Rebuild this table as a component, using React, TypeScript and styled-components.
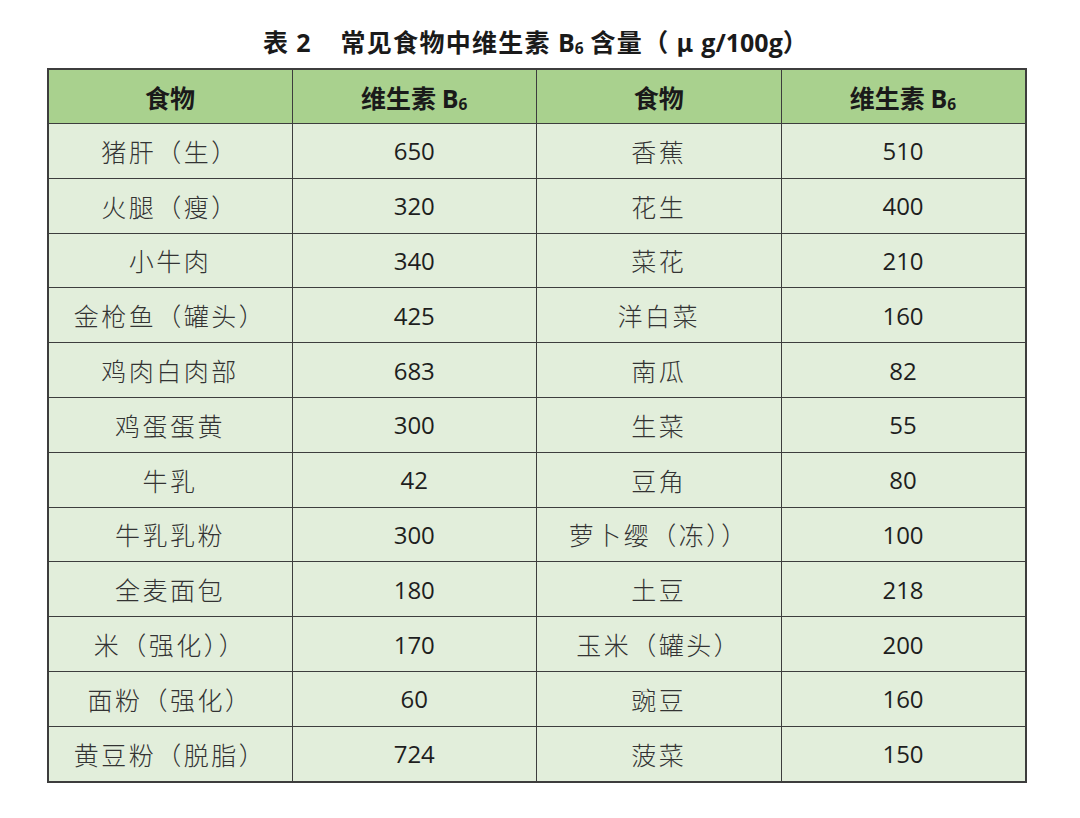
import { createGlobalStyle } from 'styled-components';
import styled from 'styled-components';

const GlobalStyle = createGlobalStyle`
  body {
    margin: 0;
    background: #ffffff;
    font-family: "Noto Sans CJK SC", "Noto Sans", sans-serif;
  }
`;

const Page = styled.div`
  width: 1080px;
  height: 818px;
  padding-top: 24px;
  box-sizing: border-box;
  display: flex;
  flex-direction: column;
  align-items: center;
`;

const Title = styled.h1`
  margin: 0 0 10px -8px;
  height: 34px;
  line-height: 34px;
  text-align: center;
  white-space: pre;
  font-size: 25px;
  font-weight: 600;
  color: #1a1a1a;
  letter-spacing: 1.3px;
`;

const Latin = styled.span`
  font-family: "Open Sans", "Noto Sans", sans-serif;
  font-weight: 700;
  letter-spacing: 0;
`;

const Gap = styled.span<{ $w: number }>`
  display: inline-block;
  width: ${({ $w }) => $w}px;
`;

const Sub = styled.sub`
  font-size: 0.62em;
  vertical-align: -0.1em;
  font-family: "Open Sans", sans-serif;
  font-weight: 700;
  letter-spacing: 0;
`;

const Table = styled.table`
  width: 980px;
  margin-left: -7px;
  border-collapse: collapse;
  border: 2px solid #3d3d3d;
  table-layout: fixed;
`;

const HeadCell = styled.th`
  height: 53px;
  background: #a9d18e;
  border: 1.5px solid #3d3d3d;
  font-size: 25px;
  font-weight: 700;
  color: #1a1a1a;
  text-align: center;
  padding: 0;
`;

const Cell = styled.td<{ $num?: boolean }>`
  height: 53.8px;
  background: #e2eedb;
  border: 1.5px solid #3d3d3d;
  text-align: center;
  padding: 0;
  color: ${({ $num }) => ($num ? '#1e1e1e' : '#333')};
  font-size: ${({ $num }) => ($num ? '24px' : '25px')};
  letter-spacing: ${({ $num }) => ($num ? '0' : '2.5px')};
  font-family: ${({ $num }) =>
    $num ? '"Open Sans", "Noto Sans", sans-serif' : '"Noto Sans CJK SC", sans-serif'};
  font-weight: ${({ $num }) => ($num ? 400 : 300)};
`;

const rows: [string, string, string, string][] = [
  ['猪肝（生）', '650', '香蕉', '510'],
  ['火腿（瘦）', '320', '花生', '400'],
  ['小牛肉', '340', '菜花', '210'],
  ['金枪鱼（罐头）', '425', '洋白菜', '160'],
  ['鸡肉白肉部', '683', '南瓜', '82'],
  ['鸡蛋蛋黄', '300', '生菜', '55'],
  ['牛乳', '42', '豆角', '80'],
  ['牛乳乳粉', '300', '萝卜缨（冻））', '100'],
  ['全麦面包', '180', '土豆', '218'],
  ['米（强化））', '170', '玉米（罐头）', '200'],
  ['面粉（强化）', '60', '豌豆', '160'],
  ['黄豆粉（脱脂）', '724', '菠菜', '150'],
];

const VitaminHead = () => (
  <>
    维生素 <Latin>B</Latin>
    <Sub>6</Sub>
  </>
);

export default function App() {
  return (
    <>
      <GlobalStyle />
      <Page>
        <Title>
          {'表 '}
          <Latin>2</Latin>
          <Gap $w={30} />
          {'常见食物中维生素 '}
          <Latin>B</Latin>
          <Sub>6</Sub>
          {' 含量（ μ '}
          <Latin>g/100g</Latin>
          {'）'}
        </Title>
        <Table>
          <thead>
            <tr>
              <HeadCell>食物</HeadCell>
              <HeadCell>
                <VitaminHead />
              </HeadCell>
              <HeadCell>食物</HeadCell>
              <HeadCell>
                <VitaminHead />
              </HeadCell>
            </tr>
          </thead>
          <tbody>
            {rows.map((r, i) => (
              <tr key={i}>
                <Cell>{r[0]}</Cell>
                <Cell $num>{r[1]}</Cell>
                <Cell>{r[2]}</Cell>
                <Cell $num>{r[3]}</Cell>
              </tr>
            ))}
          </tbody>
        </Table>
      </Page>
    </>
  );
}
